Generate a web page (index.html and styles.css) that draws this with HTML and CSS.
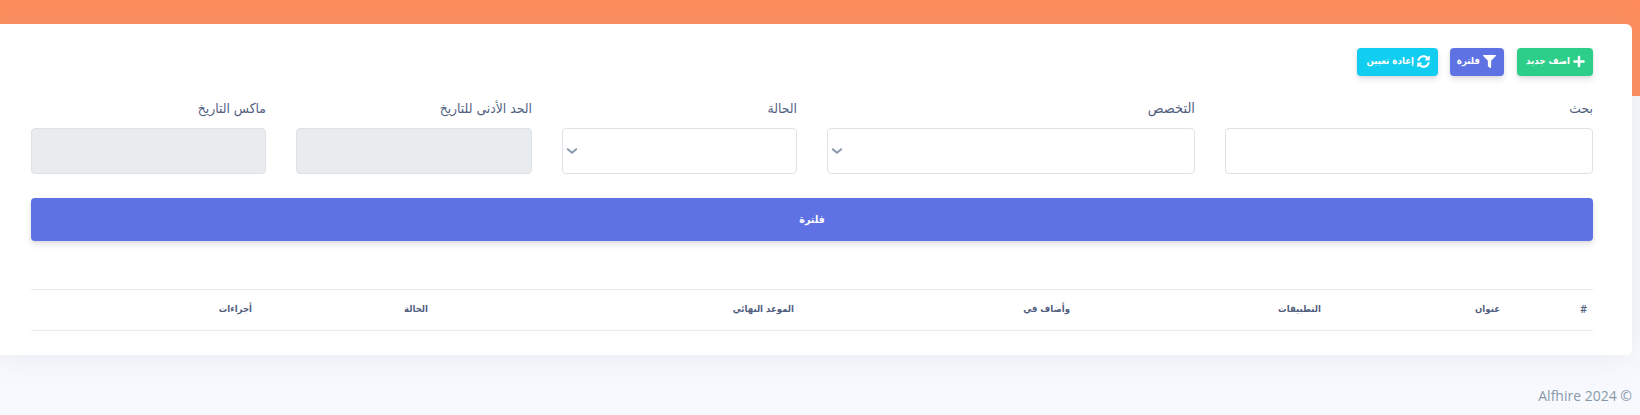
FILE: index.html
```
<!DOCTYPE html>
<html lang="ar" dir="rtl">

<head>
  <meta charset="UTF-8">
  <meta name="viewport" content="width=device-width, initial-scale=1.0">
  <title>Alfhire</title>
  <link rel="stylesheet" href="styles.css">
</head>

<body>
  <main class="page">
    <div class="card">
      <div class="actions">
        <a href="#" class="btn btn-sm btn-success">
          <svg class="icon icon-plus" viewBox="0 0 448 512"><path d="M416 208H272V64c0-17.67-14.33-32-32-32h-32c-17.67 0-32 14.33-32 32v144H32c-17.67 0-32 14.33-32 32v32c0 17.67 14.33 32 32 32h144v144c0 17.67 14.33 32 32 32h32c17.67 0 32-14.33 32-32V304h144c17.67 0 32-14.33 32-32v-32c0-17.67-14.33-32-32-32z"/></svg>
          <span>اضف جديد</span>
        </a>
        <a href="#" class="btn btn-sm btn-primary">
          <svg class="icon icon-filter" viewBox="0 0 512 512"><path d="M487.976 0H24.028C2.71 0-8.047 25.866 7.058 40.971L192 225.941V432c0 7.831 3.821 15.17 10.237 19.662l80 55.98C298.02 518.69 320 507.493 320 487.98V225.941l184.947-184.97C520.021 25.896 509.338 0 487.976 0z"/></svg>
          <span>فلترة</span>
        </a>
        <a href="#" class="btn btn-sm btn-info">
          <svg class="icon icon-sync" viewBox="0 0 512 512"><path d="M370.72 133.28C339.458 104.008 298.888 87.962 255.848 88c-77.458.068-144.328 53.178-162.791 126.85-1.344 5.363-6.122 9.15-11.651 9.15H24.103c-7.498 0-13.194-6.807-11.807-14.176C33.933 94.924 134.813 8 256 8c66.448 0 126.791 26.136 171.315 68.685L463.03 40.97C478.149 25.851 504 36.559 504 57.941V192c0 13.255-10.745 24-24 24H345.941c-21.382 0-32.09-25.851-16.971-40.971l41.75-41.749zM32 296h134.059c21.382 0 32.09 25.851 16.971 40.971l-41.75 41.75c31.262 29.273 71.835 45.319 114.876 45.28 77.418-.07 144.315-53.144 162.787-126.849 1.344-5.363 6.122-9.15 11.651-9.15h57.304c7.498 0 13.194 6.807 11.807 14.176C478.067 417.076 377.187 504 256 504c-66.448 0-126.791-26.136-171.315-68.685L48.97 471.03C33.851 486.149 8 475.441 8 454.059V320c0-13.255 10.745-24 24-24z"/></svg>
          <span>إعادة تعيين</span>
        </a>
      </div>

      <form class="filters">
        <div class="field">
          <label for="search">بحث</label>
          <input type="text" id="search" class="control">
        </div>
        <div class="field">
          <label class="label-major">التخصص</label>
          <div class="control select">
            <svg class="chevron" viewBox="0 0 12 8"><path d="M1.8 2.2 6 5.8l4.2-3.6"/></svg>
          </div>
        </div>
        <div class="field">
          <label>الحالة</label>
          <div class="control select">
            <svg class="chevron" viewBox="0 0 12 8"><path d="M1.8 2.2 6 5.8l4.2-3.6"/></svg>
          </div>
        </div>
        <div class="field">
          <label for="min-date">الحد الأدنى للتاريخ</label>
          <input type="text" id="min-date" class="control" readonly>
        </div>
        <div class="field">
          <label for="max-date">ماكس التاريخ</label>
          <input type="text" id="max-date" class="control" readonly>
        </div>
        <button type="button" class="btn btn-primary btn-block">فلترة</button>
      </form>

      <table class="table">
        <thead>
          <tr>
            <th class="col-id">#</th>
            <th class="col-title">عنوان</th>
            <th class="col-apps">التطبيقات</th>
            <th class="col-added">وأضاف في</th>
            <th class="col-deadline">الموعد النهائي</th>
            <th class="col-status">الحالة</th>
            <th class="col-actions">أجراءات</th>
          </tr>
        </thead>
      </table>
    </div>

    <footer class="footer" dir="ltr">Alfhire 2024 ©</footer>
  </main>
</body>

</html>
```
FILE: styles.css
```
* {
  box-sizing: border-box;
}

body {
  margin: 0;
  height: 415px;
  overflow: hidden;
  background: linear-gradient(#ff8d5b 96px, #f8f9fe 96px);
  font-family: 'Open Sans', 'DejaVu Sans', sans-serif;
  color: #525f7f;
}

.page {
  padding: 24px 8px 0 0;
  margin-left: -8px;
}

.card {
  height: 331px;
  padding: 24px 39px;
  background: #fff;
  border-radius: 6px;
  box-shadow: 0 0 32px 0 rgba(136, 152, 170, 0.17);
}

.actions {
  display: flex;
  gap: 12px;
  height: 28px;
}

.btn {
  display: flex;
  align-items: center;
  justify-content: center;
  border: 0;
  border-radius: 4px;
  color: #fff;
  font-family: 'DejaVu Sans Condensed', 'DejaVu Sans', sans-serif;
  font-weight: 700;
  text-decoration: none;
  white-space: nowrap;
  box-shadow: 0 4px 6px rgba(50, 50, 93, 0.11), 0 1px 3px rgba(0, 0, 0, 0.08);
}

.btn-sm {
  justify-content: flex-start;
  gap: 3px;
  height: 28px;
  padding: 0 8px 2px;
  font-size: 9.6px;
  line-height: 24px;
}

.btn-success {
  width: 76px;
  background: #2dce89;
}

.btn-primary {
  background: #5e72e4;
}

.btn-sm.btn-primary {
  width: 54px;
  margin-right: 1px;
}

.btn-info {
  width: 81px;
  background: #11cdef;
}

.icon {
  flex: none;
  width: 13px;
  height: 13px;
  fill: #fff;
}

.icon-plus {
  width: 12px;
}

.filters {
  display: grid;
  grid-template-columns: 368px 368px 235px 236px 235px;
  column-gap: 30px;
}

.field label {
  display: block;
  height: 52px;
  padding-top: 20px;
  font-family: 'DejaVu Sans Condensed', 'DejaVu Sans', sans-serif;
  font-size: 13.8px;
  line-height: 24px;
  white-space: nowrap;
}

.field .label-major {
  font-size: 14.5px;
}

.control {
  display: block;
  width: 100%;
  height: 46px;
  border: 1px solid #dee2e6;
  border-radius: 4px;
  background: #fff;
  outline: 0;
}

.control[readonly] {
  background: #e9ecef;
}

.select {
  display: flex;
  align-items: center;
  justify-content: flex-end;
  padding-left: 3px;
}

.chevron {
  width: 12px;
  height: 8px;
  fill: none;
  stroke: #8898aa;
  stroke-width: 2;
  stroke-linecap: round;
}

.btn-block {
  grid-column: 1 / -1;
  height: 43px;
  margin-top: 24px;
  padding: 0 0 2px;
  font-size: 10.5px;
}

.table {
  width: 1562px;
  margin-top: 48px;
  border-collapse: separate;
  border-spacing: 0;
  table-layout: fixed;
}

.table th {
  height: 42px;
  padding: 0 6px 2px;
  border-top: 1px solid #e9ecef;
  border-bottom: 1px solid #e9ecef;
  font-family: 'DejaVu Sans Condensed', 'DejaVu Sans', sans-serif;
  font-size: 9.5px;
  font-weight: 700;
  line-height: 14px;
  text-align: right;
  white-space: nowrap;
}

.table .col-id {
  width: 87px;
  font-family: 'Open Sans', sans-serif;
  font-size: 10.4px;
  font-weight: 600;
}

.col-title {
  width: 179px;
}

.col-apps {
  width: 251px;
}

.col-added {
  width: 276px;
}

.col-deadline {
  width: 366px;
}

.col-status {
  width: 176px;
}

.col-actions {
  width: 227px;
}

.footer {
  padding-top: 30px;
  color: #8898aa;
  font-size: 14px;
  line-height: 21px;
  text-align: right;
}
```
